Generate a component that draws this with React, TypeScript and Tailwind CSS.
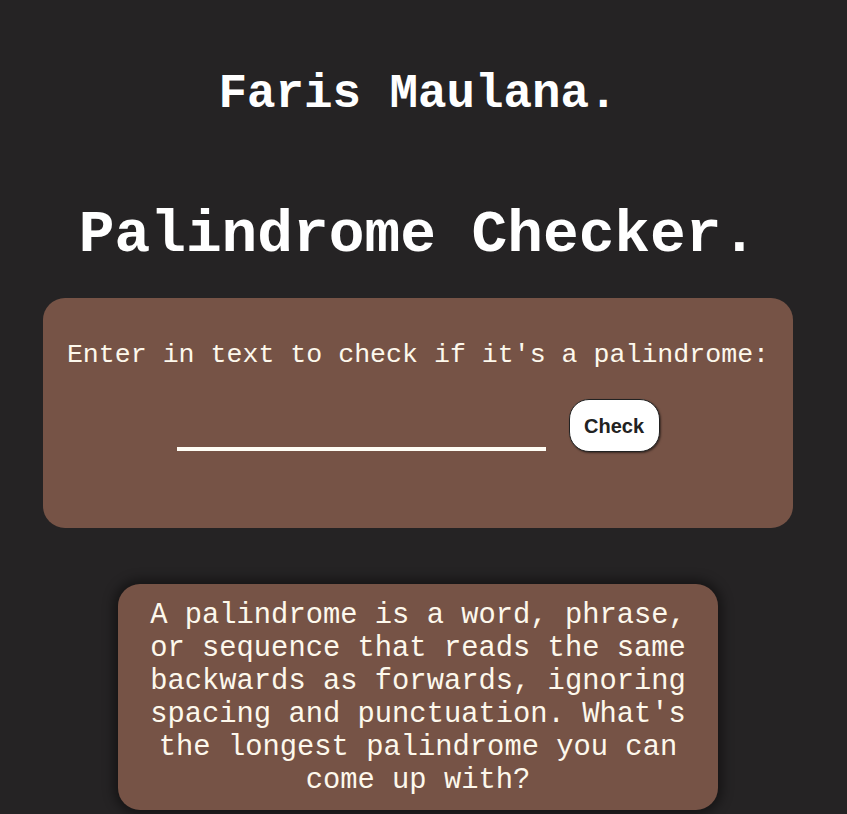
import { useState } from 'react';

export default function App() {
  const [text, setText] = useState('');

  return (
    <div className="min-h-screen bg-[#252324] font-['Liberation_Mono',monospace] overflow-hidden">
      <div className="w-[836px] flex flex-col items-center pt-[67px] pb-[4px]">
        <h2 className="text-[47.5px] leading-[54px] font-bold text-white">Faris Maulana.</h2>

        <h1 className="mt-[80px] text-[59.5px] leading-[68px] font-bold text-white">Palindrome Checker.</h1>

        <div className="mt-[29px] w-[750px] h-[230px] rounded-[22px] bg-[#765346] flex flex-col items-center pt-[42px]">
          <label htmlFor="text-input" className="text-[26.6px] leading-[30px] text-[#fdf8ec]">
            Enter in text to check if it's a palindrome:
          </label>
          <div className="mt-[29px] flex items-end gap-[23px]">
            <input
              id="text-input"
              value={text}
              onChange={(e) => setText(e.target.value)}
              className="w-[369px] h-[36px] mb-[1px] bg-transparent border-b-[4px] border-[#fffdf5] text-white text-[20px] outline-none"
            />
            <button className="w-[91px] h-[53px] rounded-[20px] bg-white border border-[#222] shadow-[1px_1px_2px_rgba(0,0,0,0.5)] font-['Liberation_Sans',Arial,sans-serif] font-bold text-[20px] text-[#222]">
              Check
            </button>
          </div>
        </div>

        <div className="mt-[56px] w-[600px] rounded-[22px] bg-[#765346] px-[30px] pt-[15px] pb-[13px] shadow-[0_0_12px_4px_rgba(0,0,0,0.45)]">
          <p className="text-[28.8px] leading-[33px] text-center text-[#fdf8ec]">
            A palindrome is a word, phrase, or sequence that reads the same backwards as forwards, ignoring spacing and punctuation. What's the longest palindrome you can come up with?
          </p>
        </div>
      </div>
    </div>
  );
}
